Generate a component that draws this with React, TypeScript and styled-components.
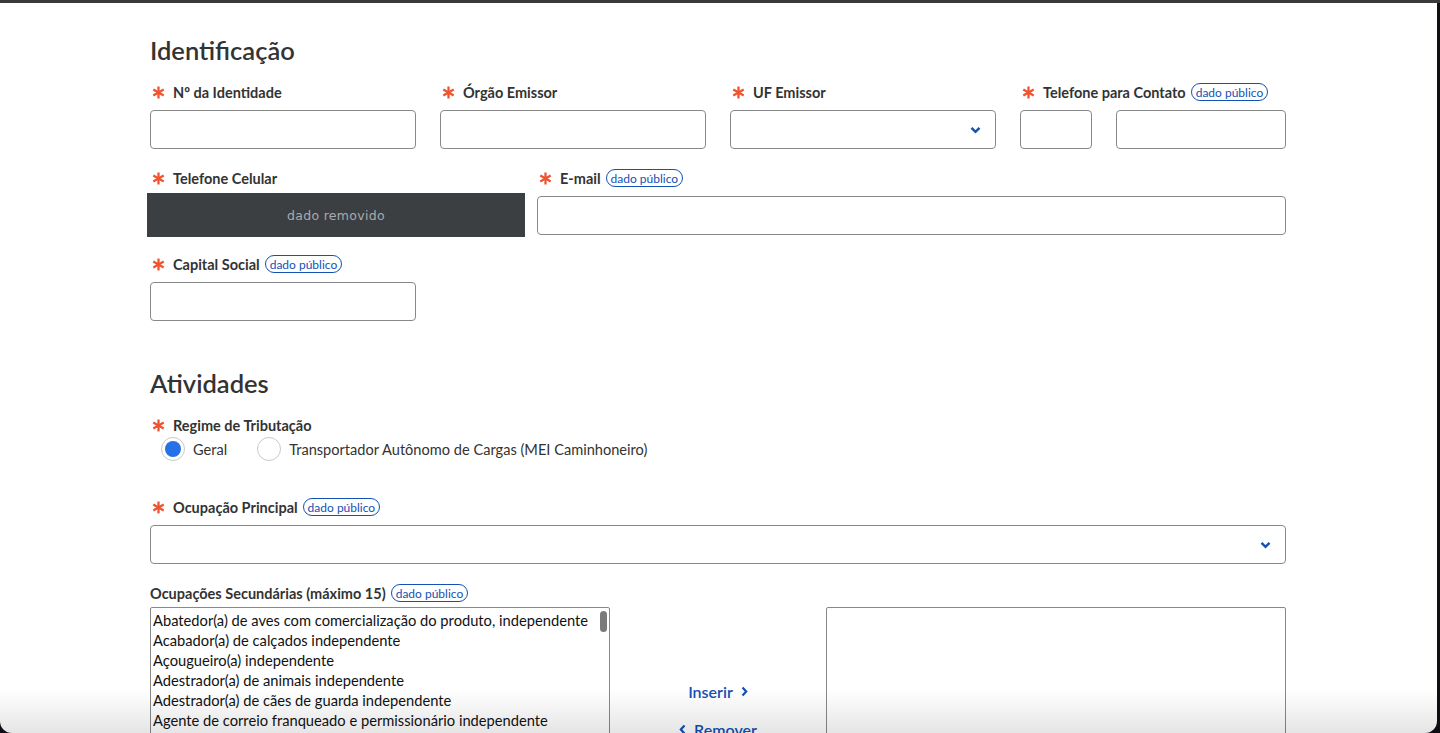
import * as React from "react";
import styled, { createGlobalStyle } from "styled-components";

const GlobalStyle = createGlobalStyle`
  html, body {
    margin: 0;
    padding: 0;
    height: 100%;
    overflow: hidden;
    background: #0d0f14;
  }
  body {
    font-family: Lato, "Open Sans", sans-serif;
    color: #333;
  }
  * { box-sizing: border-box; }
`;

const Screen = styled.div`
  height: 733px;
  padding: 3px 3px 0 0;
  background: linear-gradient(180deg, #3a3a3a 0, #3a3a3a 3px, #0d0f14 3px);
`;

const Panel = styled.div`
  position: relative;
  height: 730px;
  background: #fff;
  border-radius: 0 0 12px 12px;
  overflow: hidden;
  padding: 0 151px 0 150px;
`;

const BottomShade = styled.div`
  position: absolute;
  left: 0;
  right: 0;
  bottom: 0;
  height: 44px;
  background: linear-gradient(180deg, rgba(0, 0, 0, 0) 0%, rgba(0, 0, 0, 0.1) 100%);
  pointer-events: none;
`;

const SectionTitle = styled.h2<{ $top: number }>`
  margin: ${(p) => p.$top}px 0 16px;
  font-size: 25.5px;
  line-height: 32px;
  font-weight: 600;
  color: #333;
`;

const Row = styled.div<{ $cols: string; $gap?: number }>`
  display: grid;
  grid-template-columns: ${(p) => p.$cols};
  column-gap: 24px;
  align-items: start;
  margin-bottom: ${(p) => p.$gap ?? 19}px;
`;

const Field = styled.div`
  display: flex;
  flex-direction: column;
`;

const LabelRow = styled.div<{ $space?: number }>`
  display: flex;
  align-items: center;
  height: 20px;
  margin-bottom: ${(p) => p.$space ?? 8}px;
  font-size: 14.5px;
  font-weight: 700;
  color: #333;
  white-space: nowrap;
`;

const Star = styled.svg`
  width: 13px;
  height: 13px;
  margin: 0 8px 0 2px;
  flex: none;
`;

const Badge = styled.span`
  display: inline-flex;
  align-items: center;
  height: 18px;
  margin-left: 5px;
  padding: 0 4px;
  border: 1.5px solid #1351b4;
  border-radius: 10px;
  font-size: 12px;
  font-weight: 400;
  color: #1351b4;
`;

const Input = styled.div<{ $w?: number }>`
  height: 39px;
  flex: ${(p) => (p.$w ? `0 0 ${p.$w}px` : "1 1 auto")};
  border: 1px solid #888;
  border-radius: 4px;
  background: #fff;
`;

const Select = styled(Input)`
  display: flex;
  align-items: center;
  justify-content: flex-end;
  padding-right: 14px;
`;

const PhonePair = styled.div`
  display: flex;
  gap: 24px;
`;

const Redacted = styled.div`
  width: 378px;
  height: 44px;
  margin: -3px 0 -2px -3px;
  background: #3b3f42;
  color: #a9abad;
  font-family: "DejaVu Sans", sans-serif;
  font-size: 12.5px;
  letter-spacing: 0.3px;
  display: flex;
  align-items: center;
  justify-content: center;
`;

const RadioGroup = styled.div`
  display: flex;
  align-items: center;
  height: 24px;
  padding-left: 11px;
  margin-bottom: 36px;
`;

const RadioOption = styled.label`
  display: flex;
  align-items: center;
  gap: 8px;
  margin-right: 30px;
  font-size: 14.6px;
  color: #333;
`;

const RadioCircle = styled.span<{ $on?: boolean }>`
  width: 24px;
  height: 24px;
  border-radius: 50%;
  border: 1px solid #c9c9c9;
  display: flex;
  align-items: center;
  justify-content: center;
  &::after {
    content: "";
    width: 16px;
    height: 16px;
    border-radius: 50%;
    background: ${(p) => (p.$on ? "#2670e8" : "transparent")};
  }
`;

const Transfer = styled.div`
  display: grid;
  grid-template-columns: 460px 1fr 460px;
`;

const ListBox = styled.div`
  position: relative;
  height: 200px;
  border: 1px solid #888;
  border-radius: 2px;
  padding: 2px 2px;
  overflow: hidden;
`;

const ListItem = styled.div`
  font-size: 14.7px;
  line-height: 20px;
  color: #111;
  white-space: nowrap;
`;

const Thumb = styled.div`
  position: absolute;
  top: 3px;
  right: 2px;
  width: 7px;
  height: 21px;
  border-radius: 4px;
  background: #7a7a7a;
`;

const Actions = styled.div`
  display: flex;
  flex-direction: column;
  align-items: center;
  gap: 18px;
  padding-top: 74px;
`;

const ActionButton = styled.button`
  display: flex;
  align-items: center;
  gap: 8px;
  height: 20px;
  border: 0;
  background: none;
  padding: 0;
  font-family: inherit;
  font-size: 16px;
  font-weight: 600;
  color: #1351b4;
`;

const Asterisk = () => (
  <Star viewBox="0 0 12 12">
    <g stroke="#f0532f" strokeWidth="2.1" strokeLinecap="butt">
      <line x1="6" y1="0.5" x2="6" y2="11.5" />
      <line x1="1.2" y1="3.2" x2="10.8" y2="8.8" />
      <line x1="1.2" y1="8.8" x2="10.8" y2="3.2" />
    </g>
  </Star>
);

const ChevronDown = () => (
  <svg width="11" height="8" viewBox="0 0 11 8">
    <path d="M1.5 1.8 L5.5 5.8 L9.5 1.8" fill="none" stroke="#1351b4" strokeWidth="2.4" />
  </svg>
);

const Chevron = ({ left }: { left?: boolean }) => (
  <svg width="7" height="11" viewBox="0 0 7 11">
    <path
      d={left ? "M5.5 1.5 L1.8 5.5 L5.5 9.5" : "M1.5 1.5 L5.2 5.5 L1.5 9.5"}
      fill="none"
      stroke="#1351b4"
      strokeWidth="2.2"
    />
  </svg>
);

const Label = ({
  text,
  required = true,
  pub,
  space,
}: {
  text: string;
  required?: boolean;
  pub?: boolean;
  space?: number;
}) => (
  <LabelRow $space={space}>
    {required && <Asterisk />}
    {text}
    {pub && <Badge>dado público</Badge>}
  </LabelRow>
);

const ocupacoes = [
  "Abatedor(a) de aves com comercialização do produto, independente",
  "Acabador(a) de calçados independente",
  "Açougueiro(a) independente",
  "Adestrador(a) de animais independente",
  "Adestrador(a) de cães de guarda independente",
  "Agente de correio franqueado e permissionário independente",
  "Agente de matrícula independente",
  "Agente de viagens independente",
  "Alfaiate independente",
];

export default function App() {
  return (
    <>
      <GlobalStyle />
      <Screen>
        <Panel>
          <SectionTitle $top={31}>Identificação</SectionTitle>

          <Row $cols="repeat(4, 1fr)">
            <Field>
              <Label text="Nº da Identidade" />
              <Input />
            </Field>
            <Field>
              <Label text="Órgão Emissor" />
              <Input />
            </Field>
            <Field>
              <Label text="UF Emissor" />
              <Select>
                <ChevronDown />
              </Select>
            </Field>
            <Field>
              <Label text="Telefone para Contato" pub />
              <PhonePair>
                <Input $w={72} />
                <Input />
              </PhonePair>
            </Field>
          </Row>

          <Row $cols="363px 1fr">
            <Field>
              <Label text="Telefone Celular" />
              <Redacted>dado removido</Redacted>
            </Field>
            <Field>
              <Label text="E-mail" pub />
              <Input />
            </Field>
          </Row>

          <Row $cols="266px 1fr" $gap={46}>
            <Field>
              <Label text="Capital Social" pub />
              <Input />
            </Field>
          </Row>

          <SectionTitle $top={0}>Atividades</SectionTitle>

          <Label text="Regime de Tributação" space={2} />
          <RadioGroup>
            <RadioOption>
              <RadioCircle $on />
              Geral
            </RadioOption>
            <RadioOption>
              <RadioCircle />
              Transportador Autônomo de Cargas (MEI Caminhoneiro)
            </RadioOption>
          </RadioGroup>

          <Row $cols="1fr">
            <Field>
              <Label text="Ocupação Principal" pub />
              <Select>
                <ChevronDown />
              </Select>
            </Field>
          </Row>

          <Label text="Ocupações Secundárias (máximo 15)" required={false} pub space={4} />
          <Transfer>
            <ListBox>
              {ocupacoes.map((o) => (
                <ListItem key={o}>{o}</ListItem>
              ))}
              <Thumb />
            </ListBox>
            <Actions>
              <ActionButton>
                Inserir <Chevron />
              </ActionButton>
              <ActionButton>
                <Chevron left /> Remover
              </ActionButton>
            </Actions>
            <ListBox />
          </Transfer>

          <BottomShade />
        </Panel>
      </Screen>
    </>
  );
}
